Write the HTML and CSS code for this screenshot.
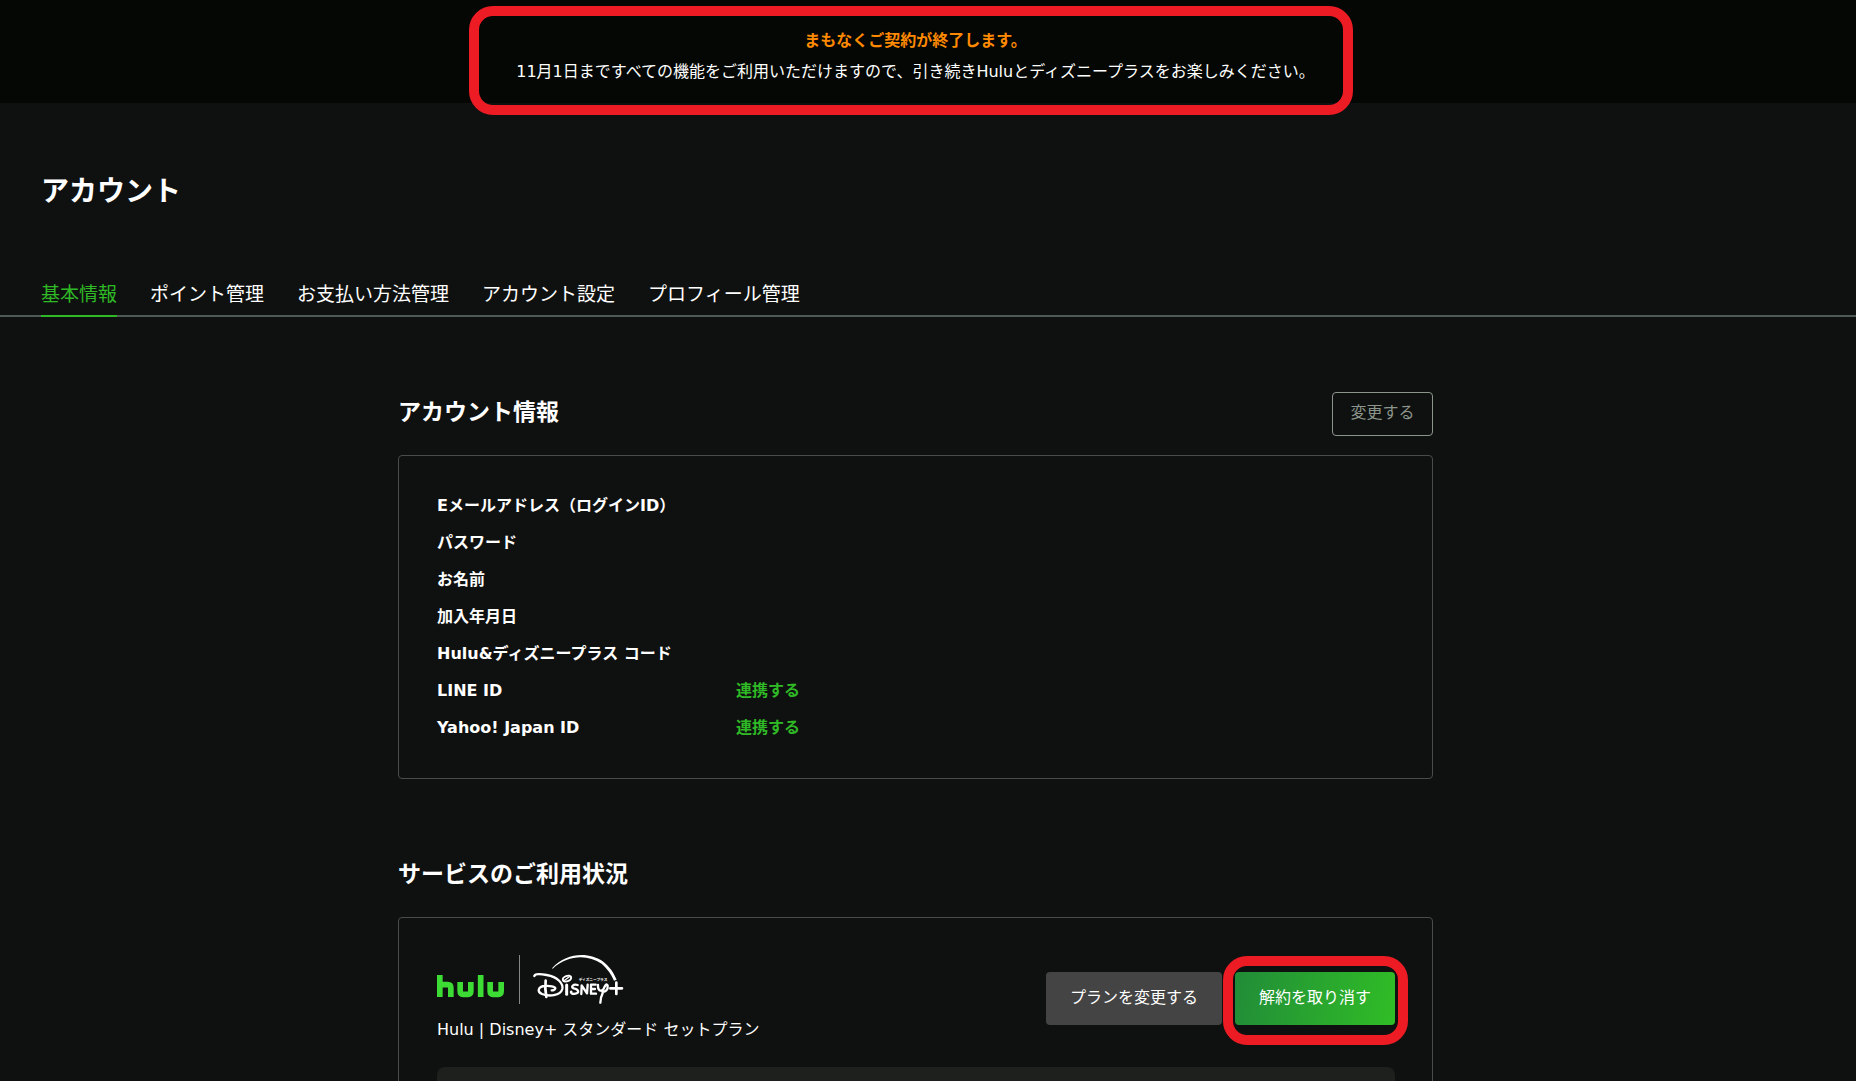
FILE: index.html
```html
<!DOCTYPE html>
<html lang="ja">
<head>
<meta charset="utf-8">
<meta name="viewport" content="width=device-width, initial-scale=1">
<title>アカウント</title>
<link rel="stylesheet" href="styles.css">
</head>
<body>
<div class="notice" role="status">
  <p class="notice-title">まもなくご契約が終了します。</p>
  <p>11月1日まですべての機能をご利用いただけますので、引き続きHuluとディズニープラスをお楽しみください。</p>
  <span class="highlight highlight-notice"></span>
</div>
<header class="page-header">
  <h1>アカウント</h1>
  <nav class="tabs">
    <a class="tab active" href="#basic" aria-current="page">基本情報</a>
    <a class="tab" href="#points">ポイント管理</a>
    <a class="tab" href="#payment">お支払い方法管理</a>
    <a class="tab" href="#settings">アカウント設定</a>
    <a class="tab" href="#profiles">プロフィール管理</a>
  </nav>
</header>
<main class="content">
  <section>
    <div class="section-head">
      <h2>アカウント情報</h2>
      <button class="btn-outline" type="button">変更する</button>
    </div>
    <div class="card">
      <table class="info">
        <tr><th scope="row">Eメールアドレス（ログインID）</th><td></td></tr>
        <tr><th scope="row">パスワード</th><td></td></tr>
        <tr><th scope="row">お名前</th><td></td></tr>
        <tr><th scope="row">加入年月日</th><td></td></tr>
        <tr><th scope="row">Hulu&amp;ディズニープラス コード</th><td></td></tr>
        <tr><th scope="row">LINE ID</th><td><a href="#line">連携する</a></td></tr>
        <tr><th scope="row">Yahoo! Japan ID</th><td><a href="#yahoo">連携する</a></td></tr>
      </table>
    </div>
  </section>
  <section>
    <div class="section-head">
      <h2>サービスのご利用状況</h2>
    </div>
    <div class="card card-service">
      <div class="plan">
        <div>
          <svg class="logos" viewBox="21 30 561 147" role="img" aria-label="Hulu Disney+">
            <g fill="none" stroke="#3ddc34" stroke-width="17">
              <path d="M29.500 90V156M29.500 119H53Q62.500 119 62.500 129V156"/>
              <path d="M90.500 111V138Q90.500 148 99 148H114Q122.500 148 122.500 138V111"/>
              <path d="M152 90V156"/>
              <path d="M180.500 111V138Q180.500 148 189 148H205Q213.500 148 213.500 138V111"/>
            </g>
            <path d="M268.500 30V177" stroke="#858785" stroke-width="3"/>
            <path d="M366 70C410 22 476 20 520 50Q546 70 560 104L552 107Q539 77 515 56C474 29 416 28 368 71Z" fill="#fff"/>
            <g fill="none" stroke="#fff" stroke-width="7" stroke-linecap="round" stroke-linejoin="round">
              <path d="M313 93C314 85 334 87 350 90C384 96 400 116 397 132C391 153 356 155 336 147C320 140 324 124 345 123C359 122 376 124 376 130Q374 136 365 136"/>
              <path d="M347 107Q344 130 349 156" stroke-width="8"/>
              <path d="M410 120V148" stroke-width="9"/>
              <ellipse cx="411" cy="101" rx="13" ry="8" transform="rotate(-20 411 101)" stroke-width="6"/>
              <path d="M404 106L418 95" stroke-width="4"/>
              <path d="M443 120C429 116 421 127 431 130C446 133 450 144 436 146C426 148 420 142 424 140"/>
              <path d="M454 147L455 121L471 145L473 119"/>
              <path d="M497 119H483V146H498M484 132H495"/>
              <path d="M504 120C503 140 517 142 523 127Q529 113 533 122C535 135 526 141 517 140M519 142Q511 159 511 173"/>
              <path d="M541 130H576M559 113V147" stroke-width="8"/>
            </g>
            <text x="446" y="107" class="logo-kana">ディズニープラス</text>
          </svg>
          <p class="plan-name">Hulu | Disney+ スタンダード セットプラン</p>
        </div>
        <div class="actions">
          <button class="btn btn-gray" type="button">プランを変更する</button>
          <div class="marked">
            <button class="btn btn-green" type="button">解約を取り消す</button>
            <span class="highlight highlight-button"></span>
          </div>
        </div>
      </div>
      <div class="panel"></div>
    </div>
  </section>
</main>
</body>
</html>
```

FILE: styles.css
```css
* { box-sizing: border-box; }
html { background: #0f1110; }
body {
  margin: 0;
  height: 100vh;
  overflow: hidden;
  background: #0f1110;
  color: #fff;
  font: 16px/24px "DejaVu Sans", "Noto Sans CJK JP", sans-serif;
}
h1, h2, p { margin: 0; }
a { color: inherit; text-decoration: none; }
button { font: inherit; color: inherit; cursor: pointer; }

.notice {
  position: relative;
  padding: 25px 25px 16px 0;
  min-height: 103px;
  background: #050704;
  text-align: center;
  line-height: 31px;
}
.notice-title { color: #ff8a00; font-weight: 700; }

.highlight {
  position: absolute;
  border: 10px solid #ed1c24;
  border-radius: 24px;
  pointer-events: none;
}
.highlight-notice {
  top: 6px;
  bottom: -12px;
  left: calc(50% - 459px);
  width: 884px;
}
.highlight-button { inset: -16px -13px -20px -12px; }

.page-header { padding-top: 68px; }
h1 { padding-left: 41px; font-size: 28px; line-height: 42px; }
.tabs {
  display: flex;
  gap: 33px;
  margin-top: 62px;
  padding-left: 41px;
  border-bottom: 2px solid #4f5a56;
}
.tab {
  margin-bottom: -2px;
  padding: 4px 0 6px;
  border-bottom: 2px solid transparent;
  font-size: 19px;
  line-height: 30px;
}
.tab.active { color: #2fb926; border-color: #2fb926; }

.content {
  width: calc(100% - 25px);
  padding: 75px 16px 0;
}
section { max-width: 1035px; margin: 0 auto 75px; }
.section-head {
  display: flex;
  justify-content: space-between;
  align-items: center;
  min-height: 44px;
  margin-bottom: 19px;
}
h2 { padding-bottom: 4px; font-size: 23px; line-height: 36px; }
.btn-outline {
  width: 101px;
  height: 44px;
  padding: 0 0 2px;
  border: 1px solid #8b958b;
  border-radius: 4px;
  background: none;
  color: #8b958b;
}
.card {
  padding: 31px 37px 32px 38px;
  border: 1px solid #4a4c4b;
  border-radius: 4px;
}
.info { border-collapse: collapse; }
.info th, .info td { height: 37px; padding: 0; text-align: left; font-weight: 700; }
.info th { width: 299px; }
.info td { color: #2fb926; }

.card-service { padding-top: 37px; }
.plan { display: flex; justify-content: space-between; align-items: flex-start; }
.logos { display: block; width: 187px; height: 49px; }
.logo-kana { fill: #fff; font-size: 11px; font-weight: 700; }
.plan-name { margin-top: 14px; }
.actions { display: flex; gap: 13px; margin-top: 17px; }
.marked { position: relative; display: flex; }
.btn { height: 53px; padding: 0 0 2px; border: 0; border-radius: 4px; }
.btn-gray { width: 176px; background: #444; }
.btn-green { width: 160px; background: linear-gradient(100deg, #218c38, #30bd26); }
.panel { height: 120px; margin-top: 25px; border-radius: 8px; background: #1e201e; }
```
